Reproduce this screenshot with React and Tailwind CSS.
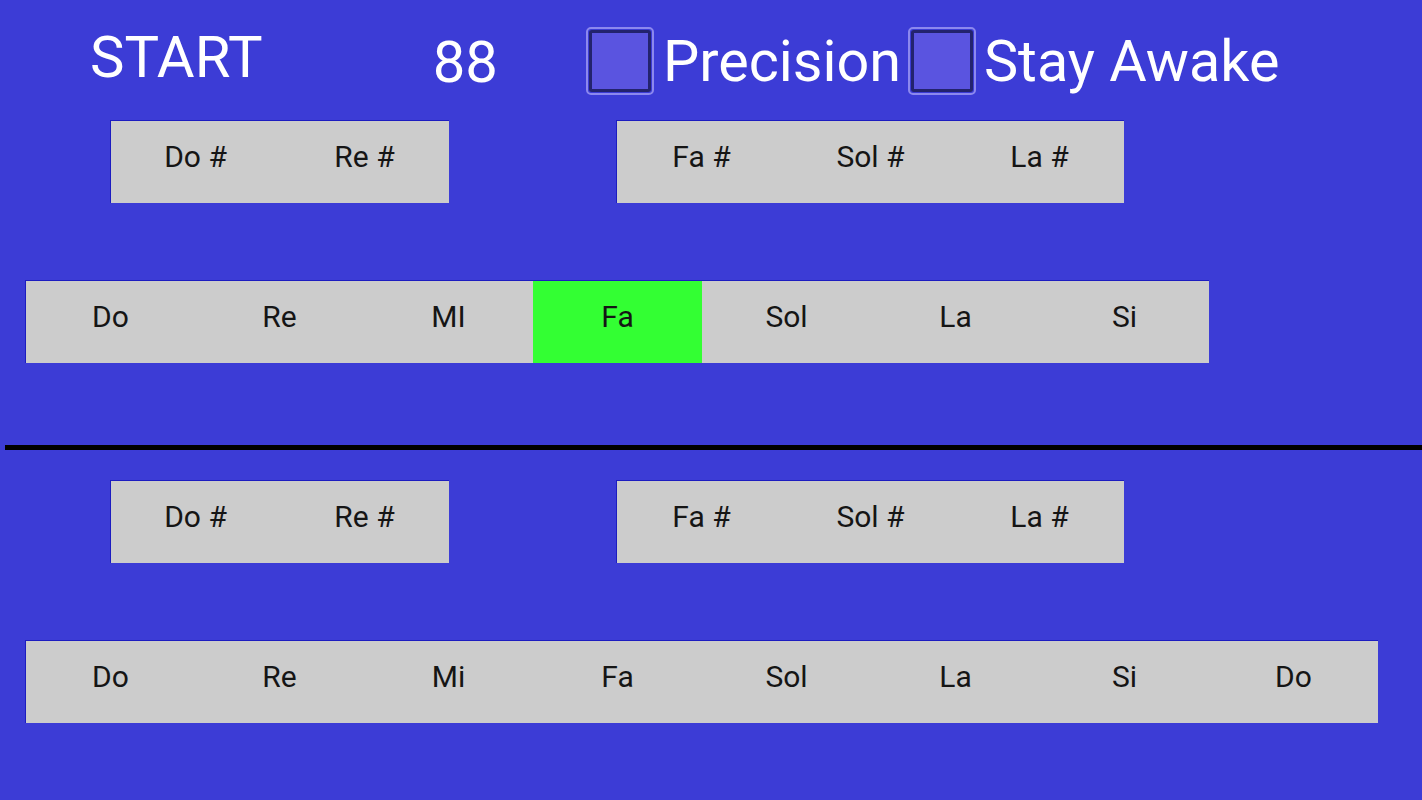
import React from 'react';

const KEY_W = 'w-[169px]';

function Key({ label, active }) {
    return (
        <div
            className={`${KEY_W} h-full flex items-center justify-center text-[30px] text-[#151515] pb-[11px] ${
                active ? 'bg-[#33ff33]' : ''
            }`}
        >
            {label}
        </div>
    );
}

function KeyBox({ labels, active }) {
    return (
        <div className="flex h-[83px] bg-[#cccccc] border-t border-l border-[#1c1cc0] border-b-[#b4b4d8]">
            {labels.map((l, i) => (
                <Key key={i} label={l} active={active === i} />
            ))}
        </div>
    );
}

function Checkbox() {
    return (
        <div className="w-[68px] h-[68px] rounded-[5px] border-2 border-[#8c88ee] p-[1px]">
            <div className="w-full h-full rounded-[3px] border-[3px] border-[#23236e] bg-[#5a54e0]"></div>
        </div>
    );
}

function Keyboard({ naturals, active }) {
    return (
        <div>
            <div className="flex ml-[110px]">
                <KeyBox labels={['Do #', 'Re #']} />
                <div className="w-[167px]"></div>
                <KeyBox labels={['Fa #', 'Sol #', 'La #']} />
            </div>
            <div className="flex ml-[25px] mt-[77px]">
                <KeyBox labels={naturals} active={active} />
            </div>
        </div>
    );
}

export default function App() {
    return (
        <div
            className="w-full h-[800px] bg-[#3c3cd6] overflow-hidden"
            style={{ fontFamily: 'Roboto, "Liberation Sans", sans-serif' }}
        >
            <div className="flex items-center h-[68px] mt-[27px] text-white">
                <div className="ml-[90px] text-[58px] leading-none mb-[9px]">START</div>
                <div className="ml-[170px] text-[58px] leading-none mt-[2px]">88</div>
                <div className="ml-[88px]">
                    <Checkbox />
                </div>
                <div className="ml-[9px] text-[57.5px] leading-none mt-[2px]">Precision</div>
                <div className="ml-[7px]">
                    <Checkbox />
                </div>
                <div className="ml-[8px] text-[57.5px] leading-none mt-[2px]">Stay Awake</div>
            </div>

            <div className="mt-[25px]">
                <Keyboard naturals={['Do', 'Re', 'MI', 'Fa', 'Sol', 'La', 'Si']} active={3} />
            </div>

            <div className="ml-[5px] mt-[82px] h-[5px] bg-black"></div>

            <div className="mt-[30px]">
                <Keyboard naturals={['Do', 'Re', 'Mi', 'Fa', 'Sol', 'La', 'Si', 'Do']} />
            </div>
        </div>
    );
}
